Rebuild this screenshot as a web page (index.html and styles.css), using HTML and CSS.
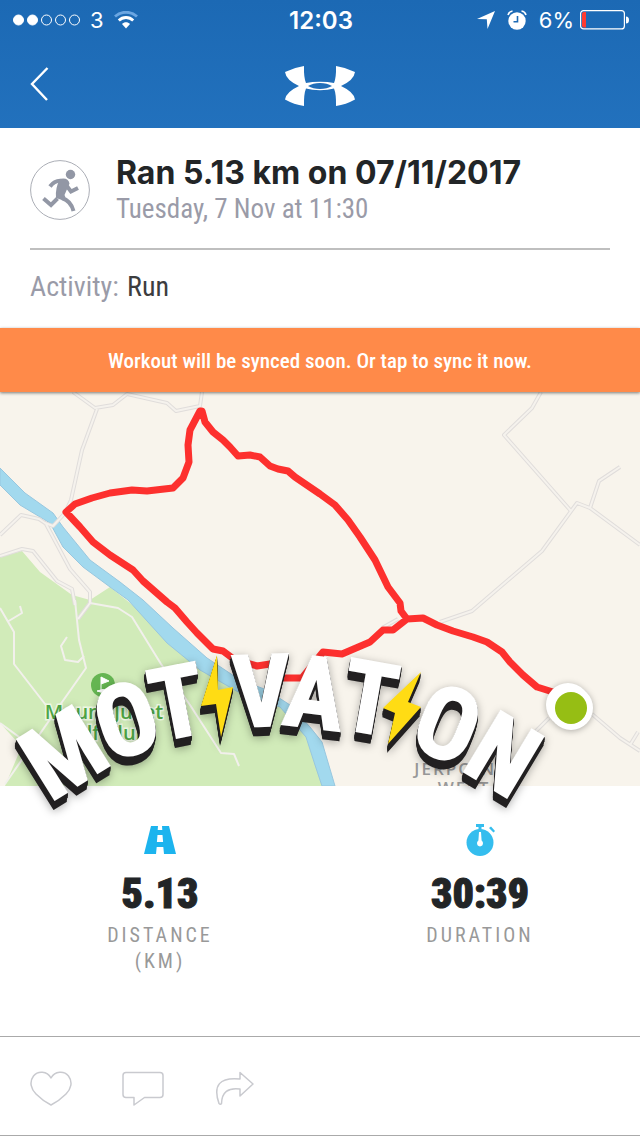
FILE: index.html
```html
<!DOCTYPE html>
<html lang="en">
<head>
  <meta charset="UTF-8">
  <meta name="viewport" content="width=device-width, initial-scale=1.0">
  <title>Workout</title>
  <link rel="stylesheet" href="styles.css">
</head>
<body>
  <header class="top">
    <div class="status">
      <div class="status-left">
        <svg width="67" height="12" viewBox="0 0 67 12" fill="none" stroke="#fff">
          <circle cx="5.500" cy="6" r="5" fill="#fff"/>
          <circle cx="19.500" cy="6" r="5" fill="#fff"/>
          <circle cx="33.500" cy="6" r="5"/>
          <circle cx="47.500" cy="6" r="5"/>
          <circle cx="61.500" cy="6" r="5"/>
        </svg>
        <span>3</span>
        <svg width="24" height="18" viewBox="0 0 24 18" fill="none" stroke="#fff" stroke-width="2.800">
          <path d="M1 5.500C7-.2 17-.2 23 5.500" stroke="#6ba6e2"/>
          <path d="M4.800 9.500c4-4 10.400-4 14.400 0"/>
          <path d="M8 13c2.200-2.200 5.800-2.200 8 0l-4 4.500z" fill="#fff" stroke="none"/>
        </svg>
      </div>
      <div class="clock">12:03</div>
      <div class="status-right">
        <svg width="18" height="18" viewBox="0 0 18 18" fill="#fff"><path d="M18 0 10.500 18 9.800 8.300 0 7.900z"/></svg>
        <svg width="20" height="20" viewBox="0 0 20 20">
          <circle cx="10" cy="11" r="8.700" fill="#fff"/>
          <path d="M1 5Q2 1.500 5.500 1M19 5Q18 1.500 14.500 1" fill="none" stroke="#fff" stroke-width="1.600"/>
          <path d="M10.500 6v5.700H6.500" fill="none" stroke="#1e6bb5" stroke-width="1.600"/>
        </svg>
        <span class="percent">6%</span>
        <svg width="49" height="20" viewBox="0 0 49 20">
          <rect x=".6" y=".6" width="43.800" height="18.300" rx="3" fill="none" stroke="#fff" stroke-width="1.200"/>
          <path d="M2 4q0-2 2-2h2v15.500H4q-2 0-2-2z" fill="#ff3b30"/>
          <path d="M46 6.500q3 0 3 3.500t-3 3.500z" fill="#fff"/>
        </svg>
      </div>
    </div>
    <nav class="navbar">
      <button class="icon-btn back" aria-label="Back">
        <svg width="20" height="36" viewBox="0 0 20 36" fill="none" stroke="#fff" stroke-width="2.400"><path d="M17.500 2 2 18l15 16"/></svg>
      </button>
      <svg class="logo" width="70" height="44" viewBox="0 -4 70 44" fill="#fff">
        <path d="M19 0Q9 1.500 0 6q1 8 14 14Q1 26 0 33.500 9 38.500 19 40q-.3-12 2-17.500Q27 24.200 35 24.200T49 22.500Q51.300 28 51 40q10-1.500 19-6.500Q69 26 56 20 69 14 70 6 61 1.500 51 0q.3 12-2 17Q43 15.800 35 15.800T21 17Q18.700 12 19 0z"/>
        <path d="M23 20q5-3 12-3t12 3q-5 3-12 3t-12-3z" fill="#216eb9"/>
      </svg>
    </nav>
  </header>

  <main>
    <section class="summary">
      <div class="workout">
        <svg class="runner" width="60" height="60" viewBox="0 0 60 60">
          <circle cx="30" cy="30" r="29.400" fill="none" stroke="#abaeb6"/>
          <circle cx="40.500" cy="14.500" r="4.700" fill="#9297a5"/>
          <g fill="none" stroke="#9297a5" stroke-width="4">
            <path d="M20 26.500q5-7 13-5.500l8 10.500 7-3.500"/>
            <path d="M13.500 38.500l7.500 6.500 6.500-6.500"/>
            <path d="M32 38q9 3 11.500 13"/>
          </g>
          <path d="M30 19q8-2 9.500 4.500L34.500 35q2 3-1 5.500L26 38q-1-10 4-19z" fill="#9297a5"/>
        </svg>
        <div>
          <h1>Ran 5.13 km on 07/11/2017</h1>
          <p class="date">Tuesday, 7 Nov at 11:30</p>
        </div>
      </div>
      <p class="activity">Activity: <span>Run</span></p>
    </section>

    <button class="sync">Workout will be synced soon. Or tap to sync it now.</button>

    <section class="map">
      <svg class="map-tile" viewBox="0 392 640 394">
        <defs>
          <g id="roads">
            <path d="M73 392 95 408 113 405 127 394 167 403 176 411 200 406 202 392"/>
            <path d="M97 409 82 450 71 500 65 513 53 526 45 523 39 519 21 515 0 535"/>
            <path d="M46 524 70 569 90 592V603L78 619"/>
            <path d="M0 556 22 549 33 551 57 581 72 589 75 605"/>
            <path d="M541 392 532 408 504 435 571 511"/>
            <path d="M640 545 590 508 577 503 542 551 472 611 440 622"/>
            <path d="M590 508 599 481 620 467M382 628 398 619"/>
            <path d="M592 714 620 738 640 751M630 745 638 732M549 718 536 731"/>
          </g>
        </defs>

        <rect y="392" width="640" height="394" fill="#f8f4ec"/>
        <path d="M0 557 22 551 40 572 72 595 90 600 110 587 145 615 200 664 290 710 312 740 330 786H5L18 755 20 745 0 723z" fill="#d1ebb9"/>
        <path d="M0 468 25 493 53 513 63 527 90 560 120 582 143 600 173 628 207 658 240 680 267 690 290 705 310 727 322 742 335 786H322L315 765 306 737 280 707 240 693 200 670 167 643 128 600 110 587 83 567 63 547 50 523 20 505 0 485z" fill="#a2d9ee" stroke="#98c7df"/>

        <!-- roads: grey casing with a light core -->
        <use href="#roads" class="road-casing"/>
        <use href="#roads" class="road-core"/>
        <g fill="none" stroke="#f2f0ec" stroke-width="2" stroke-linejoin="round">
          <path d="M75 600 79 640 86 668 60 705 5 784M0 608 14 632V664L45 704 60 718M7 622 22 613 20 606"/>
          <path d="M90 603 118 608 132 617 161 664 190 705 221 753 234 754 239 766"/>
          <path d="M67 637 61 646 65 660 78 662 84 656M0 723 30 745"/>
        </g>

        <circle cx="103" cy="685" r="12" fill="#65b552"/>
        <path d="M101 690v-13l8 4-8 3M97 691q6-3 12 0-6 3-12 0" fill="#fff" stroke="#fff" stroke-width="1"/>
        <text class="place" x="104" y="719">Mount Juliet</text>
        <text class="place" x="104" y="740">Golf Club</text>
        <text class="town" x="461" y="775">JERPOINT</text>
        <text class="town" x="464" y="794">WEST</text>

        <path class="route" d="M553 692 537 687 523 675 510 662 502 652 487 642 473 637 453 631 437 625 423 618 407 619 401 611 400 603 388 587 375 560 360 537 348 520 335 505 320 494 295 477 288 471 278 469 270 466 260 457 250 455 238 456 230 447 223 440 213 432 205 422 202 411H200L190 430 188 445 189 462 183 478 173 488 147 491 132 490 110 493 92 498 75 504 66 512 80 527 93 542 110 555 133 570 143 581 167 602 175 608 187 622 197 633 213 649 223 651 235 660 257 666 270 664 283 678 302 678 323 652 342 654 370 642 383 630 393 630 407 619"/>
        <g class="pin">
          <circle cx="568" cy="705" r="22" fill="#fff"/>
          <circle cx="571" cy="708" r="22" fill="#fff"/>
          <circle cx="571" cy="708" r="16" fill="#96be14"/>
        </g>
      </svg>

      <svg class="sticker" viewBox="0 392 640 394">
        <g class="sticker-word">
          <text transform="translate(63 752) rotate(-32)" y="36">M</text>
          <text transform="translate(126 719) rotate(-18)" y="36">O</text>
          <text transform="translate(177 701) rotate(-11)" y="36">T</text>
          <path d="M217 655 201 706 216 704 221 737 233 687 218 690z"/>
          <text transform="translate(261 690) rotate(-2)" y="36">V</text>
          <text transform="translate(315 692) rotate(7)" y="36">A</text>
          <text transform="translate(370 697) rotate(10)" y="36">T</text>
          <path d="M421 672 383 708 395 713 388 744 421 707 408 702z"/>
          <text transform="translate(448 723) rotate(22)" y="36">O</text>
          <text transform="translate(504 754) rotate(31)" y="36">N</text>
        </g>
      </svg>
    </section>

    <section class="stats">
      <div class="stat">
        <svg width="32" height="32" viewBox="0 0 32 32">
          <path d="M7 2h18l7 28H0z" fill="#1cb4ee"/>
          <path d="M14 2h4l.3 4h-4.600zM13.500 11h5l.6 7h-6.200zM12.700 23h6.600l.7 7h-8z" fill="#fff"/>
        </svg>
        <strong>5.13</strong>
        <span>DISTANCE<br>(KM)</span>
      </div>
      <div class="stat">
        <svg width="32" height="32" viewBox="0 0 32 32">
          <circle cx="16" cy="18.500" r="13.500" fill="#34bdee"/>
          <path d="M12 0h8v3h-2.500v3h-3V3H12zM25 4l2-1.500 4 4.500-1.500 1.500z" fill="#34bdee"/>
          <path d="M15 8h2l.6 8.500q1.400 1 1.400 2.500 0 3-3 3.500-3-.5-3-3.500 0-1.500 1.400-2.500z" fill="#fff"/>
        </svg>
        <strong>30:39</strong>
        <span>DURATION</span>
      </div>
    </section>
  </main>

  <footer class="actions">
    <button class="icon-btn" aria-label="Like">
      <svg width="42" height="36" viewBox="0 0 42 36"><path d="M21 7C17 0 8-.5 3.500 5-1 11 1 18 6 23q7 7 15 11 8-4 15-11c5-5 7-12 2.500-18C34-.5 25 0 21 7z"/></svg>
    </button>
    <button class="icon-btn" aria-label="Comment">
      <svg width="42" height="36" viewBox="0 0 42 36"><path d="M4 1.500h34q3 0 3 3v19q0 3-3 3H22.500L12 34v-7.500H4q-3 0-3-3v-19q0-3 3-3z"/></svg>
    </button>
    <button class="icon-btn" aria-label="Share">
      <svg width="42" height="36" viewBox="0 0 42 36"><path d="M26 1.500 39 13 26 25v-7Q8 15.500 7.500 32.500q-1 1.500-2.500 0Q-4.500 5 26 8z"/></svg>
    </button>
  </footer>
</body>
</html>
```
FILE: styles.css
```css
* {
  box-sizing: border-box;
}

body {
  margin: 0;
  min-height: 100vh;
  display: flex;
  flex-direction: column;
  background: #fff;
  color: #222527;
  font-family: 'Roboto Condensed', 'Liberation Sans Narrow', Roboto, sans-serif;
}

h1, p {
  margin: 0;
}

button {
  border: none;
  padding: 0;
  background: none;
  font-family: inherit;
  cursor: pointer;
}

svg {
  display: block;
}

main {
  flex: 1;
}

/* header */
.top {
  background: linear-gradient(#1c69b4, #2271bd);
  color: #fff;
}

.status {
  height: 40px;
  padding: 0 11px 0 13px;
  display: grid;
  grid-template-columns: 1fr auto 1fr;
  align-items: center;
  font-family: Inter, sans-serif;
  font-size: 22px;
}

.status-left,
.status-right {
  display: flex;
  align-items: center;
  gap: 10px;
}

.status-right {
  justify-content: flex-end;
  gap: 12px;
}

.percent {
  margin-right: -6px;
}

.clock {
  font-size: 24px;
  font-weight: 600;
}

.navbar {
  height: 88px;
  padding: 0 30px;
  display: grid;
  grid-template-columns: 1fr auto 1fr;
  align-items: center;
}

.back {
  justify-self: start;
}

/* workout summary */
.summary {
  padding: 0 30px;
}

.workout {
  display: flex;
  align-items: center;
  gap: 26px;
  height: 122px;
  padding-top: 3px;
  border-bottom: 2px solid #bfbfbf;
}

h1 {
  font-family: Inter, sans-serif;
  font-size: 32px;
  line-height: 38px;
  font-weight: 700;
}

.date {
  font-size: 27px;
  line-height: 34px;
  color: #9a9ba8;
}

.activity {
  font-size: 28px;
  line-height: 74px;
  padding-bottom: 4px;
  color: #9a9ba8;
}

.activity span {
  margin-left: 2px;
  color: #3c3d3f;
}

.sync {
  position: relative;
  display: block;
  width: 100%;
  height: 64px;
  padding-top: 2px;
  background: #ff8a49;
  color: #fff;
  font-size: 21px;
  font-weight: 500;
  box-shadow: 0 1px 3px rgba(0, 0, 0, 0.5);
  z-index: 1;
}

/* map */
.map {
  position: relative;
}

.map-tile {
  width: 100%;
}

.road-casing,
.road-core {
  fill: none;
  stroke: #e0dddb;
  stroke-width: 4;
  stroke-linejoin: round;
}

.road-core {
  stroke: #f5f2ed;
  stroke-width: 2;
}

.place {
  font-family: 'Open Sans', sans-serif;
  font-size: 20px;
  font-weight: 600;
  text-anchor: middle;
  fill: #4fa746;
  stroke: #eef8e4;
  stroke-width: 3px;
  paint-order: stroke;
}

.town {
  font-family: 'Open Sans', sans-serif;
  font-size: 17px;
  font-weight: 600;
  letter-spacing: 2px;
  text-anchor: middle;
  fill: #999;
}

.route {
  fill: none;
  stroke: #fd302e;
  stroke-width: 7;
  stroke-linejoin: round;
}

.pin {
  filter: drop-shadow(0 1px 3px rgba(0, 0, 0, 0.3));
}

/* lettering runs past the lower edge of the map */
.sticker {
  position: absolute;
  inset: 0;
  width: 100%;
  overflow: visible;
  pointer-events: none;
}

.sticker-word {
  font-size: 100px;
  font-weight: 700;
  text-anchor: middle;
  fill: #fff;
  filter: drop-shadow(0 1px 0 #222021) drop-shadow(0 2px 0 #222021) drop-shadow(-1px 4px 0 #222021) drop-shadow(0 2px 0 #222021) drop-shadow(0 2px 4px rgba(0, 0, 0, 0.3));
}

.sticker-word text {
  stroke: #fff;
  stroke-width: 2;
}

.sticker-word path {
  fill: #ffdc14;
}

/* stats */
.stats {
  display: grid;
  grid-template-columns: 1fr 1fr;
  padding-top: 38px;
}

.stat {
  display: flex;
  flex-direction: column;
  align-items: center;
  text-align: center;
}

.stat strong {
  font-size: 42px;
  line-height: 50px;
  font-weight: 900;
  -webkit-text-stroke: 1px #222527;
  margin: 13px 0 3px;
}

.stat span {
  font-size: 20px;
  line-height: 26px;
  letter-spacing: 3px;
  color: #999;
}

/* bottom bar */
.actions {
  display: flex;
  align-items: center;
  gap: 50px;
  height: 100px;
  padding: 6px 30px 0;
  border-top: 1px solid #aaa;
  border-bottom: 1px solid #aaa;
}

.actions svg {
  fill: none;
  stroke: #c9cacf;
  stroke-width: 1.500px;
  stroke-linejoin: round;
}
```
